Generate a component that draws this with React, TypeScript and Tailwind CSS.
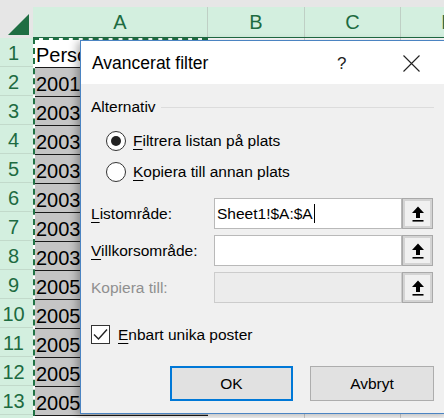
import type { ReactNode } from 'react'

const ROWS: { n: number; v: string }[] = [
  { n: 1, v: 'Perso' },
  { n: 2, v: '2001' },
  { n: 3, v: '2003' },
  { n: 4, v: '2003' },
  { n: 5, v: '2003' },
  { n: 6, v: '2003' },
  { n: 7, v: '2003' },
  { n: 8, v: '2003' },
  { n: 9, v: '2005' },
  { n: 10, v: '2005' },
  { n: 11, v: '2005' },
  { n: 12, v: '2005' },
  { n: 13, v: '2005' },
]

function Key({ children }: { children: ReactNode }) {
  return <span className="underline decoration-1 underline-offset-[3px]">{children}</span>
}

function PickButton() {
  return (
    <div className="flex h-[31px] w-[31px] shrink-0 items-center justify-center border border-[#a9a9a9] bg-[#f0f0f0] shadow-[inset_0_0_0_2px_#d3d3d3]">
      <svg width="14" height="18" viewBox="0 0 14 18">
        <polygon points="7,1.5 13,8 9,8 9,13 5,13 5,8 1,8" fill="#000" />
        <rect x="1.5" y="15" width="11" height="1.6" fill="#000" />
      </svg>
    </div>
  )
}

function Field({ label, value, disabled }: { label: ReactNode; value?: string; disabled?: boolean }) {
  return (
    <div className="flex h-[31px] items-center">
      <div className={`w-[123px] ${disabled ? 'text-[#8f8f8f]' : 'text-black'}`}>{label}</div>
      <div
        className={`flex h-[31px] w-[188px] items-center border px-[2px] ${
          disabled ? 'border-[#cccccc] bg-[#ececec]' : 'border-[#b9b9b9] bg-white'
        }`}
      >
        {value && (
          <>
            <span>{value}</span>
            <span className="ml-px h-[19px] w-px bg-black" />
          </>
        )}
      </div>
      <PickButton />
    </div>
  )
}

function Dialog() {
  return (
    <div className="absolute left-[80px] top-[40px] h-[374px] w-[370px] border border-[#4b84c2] bg-[#f0f0f0] text-[15.5px] shadow-[-3px_2px_8px_rgba(0,0,0,0.3)]">
      {/* titelrad */}
      <div className="flex h-[43px] items-center bg-white pl-[11px] pt-[2px]">
        <span className="w-[245px] text-[17.5px]">Avancerat filter</span>
        <span className="text-[17px] text-[#222]">?</span>
        <svg className="ml-[57px]" width="17" height="17" viewBox="0 0 17 17">
          <path d="M0.5 0.5 L16.5 16.5 M16.5 0.5 L0.5 16.5" stroke="#222" strokeWidth="1.1" />
        </svg>
      </div>

      <div className="flex flex-col pl-[10px] pr-[15px]">
        <div className="mt-[13px] flex h-[20px] items-center">
          <span>Alternativ</span>
          <div className="ml-[5px] h-px flex-1 bg-[#dcdcdc]" />
        </div>

        <div className="ml-[15px] mt-[14px] flex h-[20px] items-center">
          <div className="flex h-[20px] w-[20px] items-center justify-center rounded-full border border-[#333] bg-white">
            <div className="h-[10px] w-[10px] rounded-full bg-[#222]" />
          </div>
          <span className="ml-[7px]">
            <Key>F</Key>iltrera listan på plats
          </span>
        </div>

        <div className="ml-[15px] mt-[11px] flex h-[20px] items-center">
          <div className="h-[20px] w-[20px] rounded-full border border-[#333] bg-white" />
          <span className="ml-[7px]">
            <Key>K</Key>opiera till annan plats
          </span>
        </div>

        <div className="mt-[16px] flex flex-col gap-[6px]">
          <Field
            label={
              <>
                <Key>L</Key>istområde:
              </>
            }
            value="Sheet1!$A:$A"
          />
          <Field
            label={
              <>
                <Key>V</Key>illkorsområde:
              </>
            }
          />
          <Field label="Kopiera till:" disabled />
        </div>

        <div className="mt-[22px] flex h-[19px] items-center">
          <div className="flex h-[19px] w-[19px] items-center justify-center border border-[#333] bg-white">
            <svg width="15" height="13" viewBox="0 0 15 13">
              <path d="M1 6.5 L5.5 11 L14 1.5" fill="none" stroke="#222" strokeWidth="1.4" />
            </svg>
          </div>
          <span className="ml-[8px]">
            <Key>E</Key>nbart unika poster
          </span>
        </div>

        <div className="mt-[22px] flex justify-end gap-[17px]">
          <button className="h-[35px] w-[123px] border-2 border-[#0078d7] bg-[#e1e1e1]">OK</button>
          <button className="h-[35px] w-[124px] border border-[#adadad] bg-[#e1e1e1]">Avbryt</button>
        </div>
      </div>
    </div>
  )
}

function HeaderCell({ label }: { label: string }) {
  return (
    <div className="flex h-[38px] shrink-0 flex-col">
      <div className="h-[9px] bg-[#e6e6e6]" />
      <div className="flex flex-1 items-center justify-center border-r border-[#bfcfc5] bg-[#d3efdf] text-[20px] text-[#1d6b41]">
        {label}
      </div>
      <div className="h-[2px] bg-[#1f6b43]" />
    </div>
  )
}

export default function App() {
  return (
    <div className="relative h-[418px] w-[444px] overflow-hidden bg-white font-['Liberation_Sans',Arial,sans-serif] text-black">
      <div className="flex">
        {/* radrubriker */}
        <div className="flex w-[33px] shrink-0 flex-col">
          <div className="relative h-[38px] bg-[#e6e6e6]">
            <svg className="absolute left-[8px] top-[14px]" width="22" height="21" viewBox="0 0 22 21">
              <polygon points="21,0 21,21 0,21" fill="#1f6e43" />
            </svg>
          </div>
          {ROWS.map((r) => (
            <div
              key={r.n}
              className="flex h-[29px] items-center justify-center border-b border-[#c2dacb] bg-[#d3efdf] pr-[6px] pt-[2px] text-[20px] text-[#1d6b41]"
            >
              {r.n}
            </div>
          ))}
          <div className="h-[20px] bg-[#d3efdf]" />
        </div>

        {/* kolumn A */}
        <div className="flex w-[175px] shrink-0 flex-col">
          <HeaderCell label="A" />
          <div className="flex flex-col border-l-2 border-t-2 border-dashed border-[#1f7244] bg-white">
            {ROWS.map((r) => (
              <div
                key={r.n}
                className={`flex items-center overflow-hidden whitespace-nowrap border-b border-[#1a1a1a] pl-[1px] pt-[3px] text-[20px] ${
                  r.n === 1 ? 'h-[28px] bg-white' : 'h-[29px] bg-[#c5c5c5]'
                }`}
              >
                {r.v}
              </div>
            ))}
            <div className="h-[20px] bg-white" />
          </div>
        </div>

        <div className="flex w-[97px] shrink-0 flex-col">
          <HeaderCell label="B" />
          <div className="h-[380px] border-r border-[#d4d4d4]" />
        </div>
        <div className="flex w-[96px] shrink-0 flex-col">
          <HeaderCell label="C" />
          <div className="h-[380px] border-r border-[#d4d4d4]" />
        </div>
        <div className="flex w-[96px] shrink-0 flex-col">
          <HeaderCell label="D" />
        </div>
      </div>

      <Dialog />
    </div>
  )
}
